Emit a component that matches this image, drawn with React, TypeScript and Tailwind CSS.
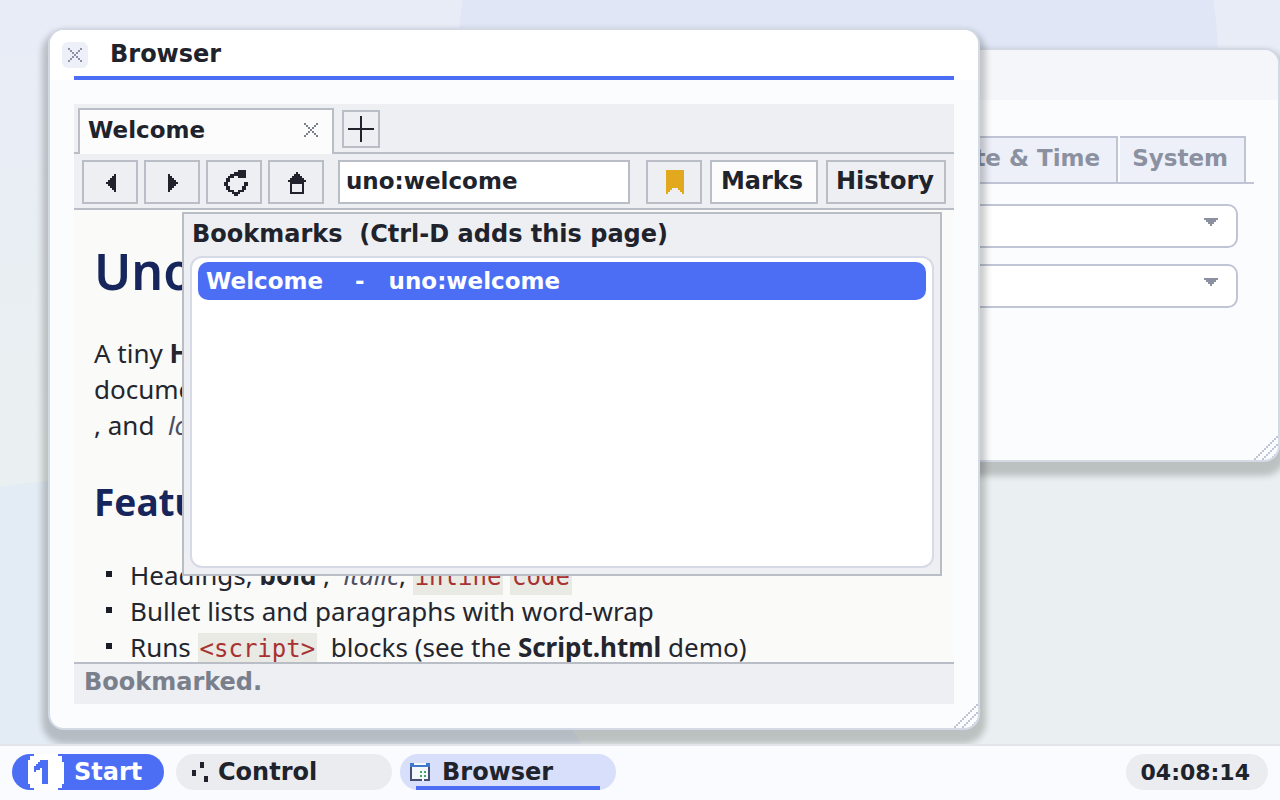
import type { ReactNode } from "react";

const INK = "#20232c";

/* Draws an icon from rows of characters; every character is one cell. */
function PixelIcon({
  rows,
  colors = { "#": "currentColor" },
  className,
}: {
  rows: string[];
  colors?: Record<string, string>;
  className: string;
}) {
  return (
    <svg
      viewBox={`0 0 ${rows[0].length} ${rows.length}`}
      shapeRendering="crispEdges"
      className={className}
      aria-hidden="true"
    >
      {Object.entries(colors).map(([key, fill]) => (
        <path
          key={key}
          fill={fill}
          d={rows
            .flatMap((row, y) =>
              row.split("").map((cell, x) => (cell === key ? `M${x} ${y}h1v1h-1z` : ""))
            )
            .join("")}
        />
      ))}
    </svg>
  );
}

const CROSS = ["#.....#", ".#...#.", "..#.#..", "...#...", "..#.#..", ".#...#.", "#.....#"];
const BACK = ["....#", "...##", "..###", ".####", "#####", ".####", "..###", "...##", "....#"];
const FORWARD = ["#....", "##...", "###..", "####.", "#####", "####.", "###..", "##...", "#...."];
const RELOAD = [
  ".......####.",
  ".....######.",
  "...########.",
  "..###..####.",
  ".##.........",
  ".##.........",
  "##........##",
  "##........##",
  ".##......##.",
  ".##......##.",
  "..###..###..",
  "....####....",
  ".....##.....",
];
const HOME = [
  "....#....",
  "...###...",
  "..#####..",
  ".#######.",
  "#########",
  ".#######.",
  ".#.....#.",
  ".#.....#.",
  ".#.....#.",
  ".#.....#.",
  ".#######.",
];
const RIBBON = [
  "#########",
  "#########",
  "#########",
  "#########",
  "#########",
  "#########",
  "#########",
  "#########",
  "#########",
  "###...###",
  "##.....##",
  "#.......#",
];
const ARROW_DOWN = ["#######", ".#####.", "..###..", "...#..."];
const GRIP = [
  "...........#",
  "..........#.",
  ".........#..",
  "........#...",
  ".......#...#",
  "......#...#.",
  ".....#...#..",
  "....#...#...",
  "...#...#...#",
  "..#...#...#.",
  ".#...#...#..",
  "#...#...#...",
];
const SLIDERS = [
  "....##..",
  "....##..",
  "....##..",
  "........",
  "##......",
  "##......",
  "##......",
  "......##",
  "......##",
  "......##",
];
const WINDOW = [
  "bbwwwwwwbb",
  "bbbbbbbbbb",
  "dwwwwwwwwd",
  "dwwwwwwwwd",
  "dwwwwgwgwd",
  "dwwwwwwwwd",
  "dwwwwgwgwd",
  "dwwwwwwwwd",
  "ddddddwddd",
];
const ONE = [
  "...############...",
  ".################.",
  ".################.",
  "######bbbb#######.",
  "#####bbbbb########",
  "####bbbbbb########",
  "###bbbbbbb########",
  "###bbb#bbb########",
  "###b###bbb########",
  "#######bbb########",
  "#######bbb########",
  "#######bbb########",
  "#######bbb########",
  "#######bbb########",
  "#######bbb########",
  ".################.",
  ".################.",
  "...############...",
];

function Frame({
  className,
  titleClass,
  title,
  children,
}: {
  className: string;
  titleClass: string;
  title?: ReactNode;
  children: ReactNode;
}) {
  return (
    <section
      className={`absolute flex flex-col overflow-hidden rounded-[16px] border-2 border-[#d3d9e5] bg-[#fbfcfe] shadow-[0_8px_6px_6px_rgba(0,0,0,0.2)] ${className}`}
    >
      <header className={`relative h-[50px] shrink-0 ${titleClass}`}>{title}</header>
      <div className="flex min-h-0 grow flex-col p-6">{children}</div>
      <PixelIcon rows={GRIP} className="absolute right-0 bottom-0 size-6 text-[#c0c6d8]" />
    </section>
  );
}

const toolButton =
  "flex h-11 shrink-0 items-center justify-center border-2 border-[#b8bdc6]";

function ControlWindow() {
  return (
    <Frame className="top-12 right-0 h-[414px] w-[70%]" titleClass="bg-[#f4f6fa]">
      <div className="mt-3 flex h-12 shrink-0 justify-end gap-0.5 border-b-2 border-[#bfc5d5] pr-2 text-[23px] text-[#8b91a1]">
        <button type="button" className="border-t-2 border-r-2 border-l-2 border-[#bfc5d5] bg-[#edf0f8] px-4 pb-1">
          Date &amp; Time
        </button>
        <button type="button" className="border-t-2 border-r-2 border-[#bfc5d5] bg-[#edf0f8] pr-4 pb-1 pl-3">
          System
        </button>
      </div>
      <div className="mt-5 flex flex-col gap-4 pr-4 pl-4">
        {["Date format", "Time zone"].map((name) => (
          <div key={name} className="relative">
            <select
              aria-label={name}
              className="block h-11 w-full appearance-none rounded-[10px] border-2 border-[#bfc5d5] bg-white"
            />
            <PixelIcon
              rows={ARROW_DOWN}
              className="pointer-events-none absolute top-[14px] right-5 h-2 w-[14px] text-[#8b91a1]"
            />
          </div>
        ))}
      </div>
    </Frame>
  );
}

function Code({ children }: { children: ReactNode }) {
  return (
    <code className="bg-[#e9eae3] px-0.5 pt-0.5 pb-1 font-['DejaVu_Sans_Mono',monospace] text-2xl leading-none text-[#a83232]">
      {children}
    </code>
  );
}

function Item({ children }: { children: ReactNode }) {
  return (
    <li className="relative whitespace-nowrap before:absolute before:top-[14px] before:-left-6 before:size-1.5 before:bg-[#1b1d26]">
      {children}
    </li>
  );
}

function WelcomePage() {
  return (
    <article className="h-full overflow-hidden px-5 pt-[25px] font-['Noto_Sans',sans-serif] text-[26px] leading-9 font-normal text-[#23262e]">
      <h1 className="text-[50px] leading-[72px] font-semibold text-[#16265c]">Uno</h1>
      <p className="mt-7">
        A tiny <b>HTML</b>
        <br />
        documents
        <br />, and&nbsp; <i className="text-[#4c4f63]">local</i>
      </p>
      <h2 className="mt-8 text-[37px] leading-[54px] font-bold text-[#16265c]">Features</h2>
      <ul className="mt-7 pl-9">
        <Item>
          Headings, <b>bold</b> ,&nbsp; <i className="text-[#4c4f63]">italic</i>,{" "}
          <Code>inline</Code> <Code>code</Code>
        </Item>
        <Item>Bullet lists and paragraphs with word-wrap</Item>
        <Item>
          Runs <Code>&lt;script&gt;</Code>&nbsp; blocks (see the <b>Script.html</b> demo)
        </Item>
      </ul>
    </article>
  );
}

function BookmarksPopup() {
  return (
    <div className="absolute top-0.5 right-3 left-[108px] flex h-[364px] flex-col border-2 border-[#b8bdc6] bg-[#eeeff3] px-1.5 pb-1.5">
      <h3 className="h-[42px] pt-1 pl-0.5 text-[24px] leading-8 whitespace-pre">
        {"Bookmarks  (Ctrl-D adds this page)"}
      </h3>
      <ul className="grow rounded-xl border-2 border-[#d6dae6] bg-white px-1.5 py-1">
        <li>
          <button
            type="button"
            className="flex h-[38px] w-full items-center gap-8 rounded-[10px] bg-[#4b6ef5] pl-2 text-[23px] text-white"
          >
            <span>Welcome</span>
            <span className="flex gap-6">
              <span>-</span>
              <span>uno:welcome</span>
            </span>
          </button>
        </li>
      </ul>
    </div>
  );
}

function BrowserWindow() {
  return (
    <Frame
      className="top-7 right-[300px] bottom-[14px] left-12"
      titleClass="bg-white"
      title={
        <div className="flex h-full items-start pt-3 pl-3">
          <button
            type="button"
            aria-label="Close window"
            className="flex size-[26px] items-center justify-center rounded-md bg-[#edf0f8] text-[#8b91a6]"
          >
            <PixelIcon rows={CROSS} className="size-[14px]" />
          </button>
          <h2 className="ml-[22px] h-6 text-[24px] leading-6">Browser</h2>
          <div className="absolute right-6 bottom-0 left-6 h-1 bg-[#4b6ef5]" />
        </div>
      }
    >
      <div className="flex h-[50px] shrink-0 bg-[#eeeff3]">
        <div className="w-1 border-b-2 border-[#b8bdc6]" />
        <div className="mt-1 flex w-64 items-center justify-between border-t-2 border-r-2 border-l-2 border-[#b8bdc6] bg-[#fcfcfc] pr-[14px] pb-1 pl-2">
          <span className="text-[23px]">Welcome</span>
          <button type="button" aria-label="Close tab" className="text-[#7b818c]">
            <PixelIcon rows={CROSS} className="size-[14px]" />
          </button>
        </div>
        <div className="grow border-b-2 border-[#b8bdc6] pt-1.5 pl-2">
          <button
            type="button"
            aria-label="New tab"
            className="flex size-[38px] items-center justify-center border-2 border-[#b8bdc6]"
          >
            <svg viewBox="0 0 26 26" shapeRendering="crispEdges" className="size-[26px]" aria-hidden="true">
              <path d="M12 0h2v26h-2zM0 12h26v2H0z" fill={INK} />
            </svg>
          </button>
        </div>
      </div>

      <div className="flex h-14 shrink-0 border-b-2 border-[#b8bdc6] bg-[#eeeff3] px-2 pt-1.5 text-[24px]">
        <div className="flex gap-1.5">
          <button type="button" aria-label="Back" className={`${toolButton} w-14 pt-0.5 pl-0.5`}>
            <PixelIcon rows={BACK} className="h-[18px] w-[10px]" />
          </button>
          <button type="button" aria-label="Forward" className={`${toolButton} w-14 pt-0.5 pl-0.5`}>
            <PixelIcon rows={FORWARD} className="h-[18px] w-[10px]" />
          </button>
          <button type="button" aria-label="Reload" className={`${toolButton} w-14 pt-0.5 pl-1`}>
            <PixelIcon rows={RELOAD} className="h-[26px] w-6" />
          </button>
          <button type="button" aria-label="Home" className={`${toolButton} w-14 pt-0.5 pl-0.5`}>
            <PixelIcon rows={HOME} className="h-[22px] w-[18px]" />
          </button>
        </div>
        <input
          aria-label="Address"
          defaultValue="uno:welcome"
          className="ml-[14px] h-11 w-0 min-w-0 grow border-2 border-[#b8bdc6] bg-white px-1.5 pb-0.5 text-[23px] outline-none"
        />
        <div className="ml-4 flex gap-2">
          <button type="button" aria-label="Bookmark this page" className={`${toolButton} w-14 pl-0.5 text-[#e2a91f]`}>
            <PixelIcon rows={RIBBON} className="h-6 w-[18px]" />
          </button>
          <button type="button" className={`${toolButton} w-[108px] bg-[#fcfcfc] pr-1 pb-0.5`}>
            Marks
          </button>
          <button type="button" className={`${toolButton} w-[120px] pr-0.5 pb-0.5`}>
            History
          </button>
        </div>
      </div>

      <div className="relative min-h-0 grow bg-[#fafaf8]">
        <WelcomePage />
        <BookmarksPopup />
      </div>

      <footer className="h-[42px] shrink-0 border-t-2 border-[#b8bdc6] bg-[#eeeff3] pl-2.5 text-[24px] leading-9 text-[#7a808b]">
        Bookmarked.
      </footer>
    </Frame>
  );
}

function Taskbar() {
  return (
    <nav className="relative flex h-14 shrink-0 items-start border-t-2 border-[#e1e5eb] bg-[#fafbfe] px-3 pt-2 text-[24px]">
      <button
        type="button"
        className="flex h-9 w-[152px] items-center gap-2.5 rounded-full bg-[#4b6ef5] pl-4 text-white"
      >
        <PixelIcon rows={ONE} colors={{ "#": "#ffffff", b: "#4b6ef5" }} className="size-9" />
        Start
      </button>
      <button
        type="button"
        className="ml-3 flex h-9 w-[216px] items-center gap-2.5 rounded-full bg-[#ebecf0] pl-4"
      >
        <PixelIcon rows={SLIDERS} className="h-5 w-4" />
        Control
      </button>
      <button
        type="button"
        className="relative ml-2 flex h-9 w-[216px] items-center gap-3 rounded-full bg-[#d8dffb] pl-2.5"
      >
        <PixelIcon
          rows={WINDOW}
          colors={{ b: "#3f78d0", d: "#454f72", w: "#f4f8fa", g: "#3fa85a" }}
          className="h-[18px] w-5"
        />
        Browser
        <span className="absolute right-4 bottom-0 left-4 h-1 bg-[#4b6ef5]" />
      </button>
      <time className="ml-auto flex h-9 items-center rounded-full bg-[#ebecf0] pr-[18px] pl-[15px] text-[22px]">
        04:08:14
      </time>
    </nav>
  );
}

export default function App() {
  return (
    <div className="flex h-screen flex-col overflow-hidden bg-[#e9eff2] font-['DejaVu_Sans',sans-serif] font-bold text-[#20232c]">
      <main className="relative min-h-0 grow overflow-hidden bg-linear-to-b from-[#e8ecf7] to-[#eaf0f1] to-60%">
        <div className="absolute -top-80 left-[458px] size-[760px] rounded-full bg-[#e0e6f5]" />
        <div className="absolute top-[480px] -left-[500px] size-[1180px] rounded-full bg-[#e3ebf4]" />
        <ControlWindow />
        <BrowserWindow />
      </main>
      <Taskbar />
    </div>
  );
}
